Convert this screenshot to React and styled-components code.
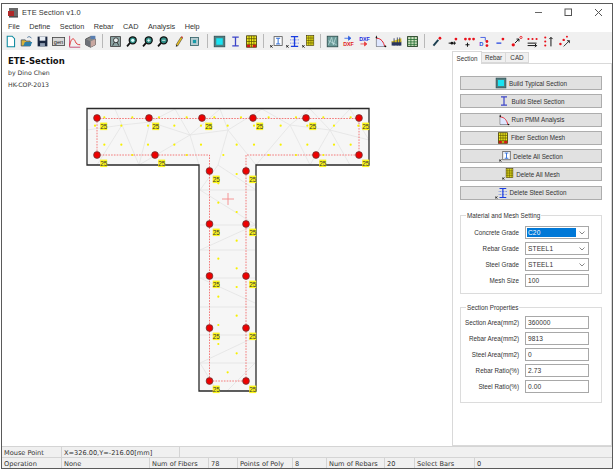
import React from "react";
import styled, { createGlobalStyle } from "styled-components";

const Global = createGlobalStyle`
  html, body { margin: 0; padding: 0; background: #fff; }
  body { width: 615px; height: 472px; overflow: hidden; font-family: "Liberation Sans", Arial, sans-serif; }
`;

const Page = styled.div`
  width: 615px; height: 472px; box-sizing: border-box; padding: 3px 2px 3px 1px;
  background: #fff; display: flex;
`;
const Win = styled.div`
  flex: 1; min-width: 0; display: flex; flex-direction: column; box-sizing: border-box;
  border: 1px solid #5a5a5a; background: #fff; color: #222;
`;
const TitleBar = styled.div`
  height: 17px; flex: none; display: flex; align-items: center; padding: 0 0 0 5px; gap: 3px;
  font-size: 7.4px; letter-spacing: 0.1px; color: #333;
`;
const TitleText = styled.span` flex: 1; `;
const WinButton = styled.div`
  width: 27px; height: 16px; display: flex; align-items: center; justify-content: center; color: #555;
`;
const MenuBar = styled.div`
  height: 11px; flex: none; display: flex; align-items: center; padding-left: 6px; gap: 9.5px;
  font-size: 7.3px; color: #333;
`;
const ToolBar = styled.div`
  height: 18px; flex: none; display: flex; align-items: center; background: #f0f0f0; padding-left: 1px;
`;
const ToolIcon = styled.div`
  width: 15.9px; height: 16px; flex: none; display: flex; align-items: center; justify-content: center;
`;
const ToolSep = styled.div`
  width: 1px; height: 14px; background: #b8b8b8; margin: 0 ${p => p.$gap || 4}px;
  flex: none;
`;
const Main = styled.div`
  flex: 1; min-height: 0; display: flex;
`;
const Canvas = styled.div`
  flex: 1; min-width: 0; display: flex; flex-direction: column; background: #fff;
`;
const Caption = styled.div`
  height: 42px; flex: none; box-sizing: border-box; padding: 6px 0 0 6px;
  font-family: "DejaVu Sans", sans-serif; color: #333; font-size: 6.2px; line-height: 12px;
`;
const CaptionTitle = styled.div`
  font-weight: bold; font-size: 8.5px; color: #111; line-height: 11px;
`;
const Drawing = styled.svg` display: block; flex: none; `;
const Side = styled.div`
  width: 160px; flex: none; display: flex; flex-direction: column; margin-right: 0; font-size: 6.3px; color: #333;
`;
const Tabs = styled.div`
  height: 13px; flex: none; display: flex; align-items: flex-end; position: relative; z-index: 1;
`;
const Tab = styled.div`
  box-sizing: border-box; height: ${p => (p.$active ? 13 : 11)}px; width: ${p => p.$w}px;
  background: ${p => (p.$active ? "#fff" : "#f0f0f0")};
  border: 1px solid #d9d9d9; border-bottom: ${p => (p.$active ? "none" : "1px solid #d9d9d9")};
  margin-left: ${p => (p.$active ? 0 : -1)}px; display: flex; align-items: center; justify-content: center;
  ${p => p.$active && "margin-bottom:-1px;"}
`;
const TabPanel = styled.div`
  flex: 1; min-height: 0; box-sizing: border-box; border: 1px solid #d9d9d9; background: #fff;
  padding: 12px 9px 0 7px; display: flex; flex-direction: column;
`;
const ActionButton = styled.div`
  height: 14px; box-sizing: border-box; margin-bottom: 4.3px; background: #e1e1e1; border: 1px solid #adadad;
  display: flex; align-items: center; justify-content: center; gap: 2px; flex: none;
`;
const Group = styled.div`
  position: relative; box-sizing: border-box; border: 1px solid #dcdcdc; height: ${p => p.$h}px;
  margin-top: ${p => p.$mt}px; padding: ${p => p.$pt}px 12px 0 0; display: flex; flex-direction: column;
  gap: ${p => p.$gap}px; flex: none;
`;
const GroupTitle = styled.div`
  position: absolute; left: 5px; top: -5px; background: #fff; padding: 0 1px; line-height: 9px;
`;
const Row = styled.div`
  display: flex; align-items: center; justify-content: flex-end; height: 13px; flex: none; gap: 6px;
`;
const Field = styled.div`
  box-sizing: border-box; width: 64px; height: 13px; border: 1px solid #a8a8a8; background: #fff;
  display: flex; align-items: center; padding-left: 1px; font-size: 6.6px; letter-spacing: .1px; position: relative;
`;
const Value = styled.span`
  flex: 1; align-self: stretch; margin: 1px 12px 1px 0; padding-left: 1px; display: flex; align-items: center;
  background: ${p => (p.$sel ? "#0078d7" : "transparent")}; color: ${p => (p.$sel ? "#fff" : "#333")};
`;
const Chevron = styled.svg`
  position: absolute; right: 3px; top: 4px;
`;
const Status = styled.div`
  flex: none; font-family: "DejaVu Sans", sans-serif; font-size: 6.6px; color: #333; background: #f0f0f0;
`;
const StatusRow = styled.div`
  display: flex; align-items: center; height: ${p => p.$h}px;
  border-top: 1px solid #d4d4d4; box-sizing: border-box;
`;
const Cell = styled.div`
  width: ${p => p.$w}px; flex: none; box-sizing: border-box; padding: 1px 0 0 2px; white-space: nowrap;
  border-right: ${p => (p.$line ? "1px solid #d4d4d4" : "none")}; align-self: stretch; display: flex; align-items: center;
`;

const S = ({ children, size = 13 }) => (
  <svg width={size} height={size} viewBox="0 0 16 16" aria-hidden="true">{children}</svg>
);
const XMark = () => <path d="M0 12.5l3 3M3 12.5l-3 3" stroke="#111" strokeWidth="1.2" fill="none" />;
const Dot = ({ x, y, r = 1.7, c = "#e8101a" }) => <circle cx={x} cy={y} r={r} fill={c} />;
const Arrow = ({ d, c = "#111" }) => <path d={d} stroke={c} strokeWidth="1.2" fill="none" />;
const Grid = () => (
  <>
    <rect x="2" y="1" width="12" height="14" fill="#f2ec1e" stroke="#3a3000" strokeWidth="1" />
    <path d="M5 1v14M8 1v14M11 1v14M2 4.5h12M2 8h12M2 11.5h12" stroke="#5a5200" strokeWidth=".9" />
    <rect x="2.5" y="12" width="4" height="3" fill="#d01818" />
    <rect x="9.5" y="12" width="4" height="3" fill="#d01818" />
  </>
);
const Typical = () => (
  <>
    <rect x="1.5" y="1.5" width="13" height="13" fill="#4f7f80" stroke="#2f4f55" />
    <rect x="4" y="4" width="8" height="8" fill="#19e3f2" />
  </>
);
const IBeam = ({ c = "#3d45c8" }) => <path d="M4 2.5h8M4 13.5h8M8 2.5v11" stroke={c} strokeWidth="1.6" fill="none" />;
const Magnifier = ({ sign }) => (
  <>
    <circle cx="9.5" cy="6.5" r="4.3" fill="#2f8d86" stroke="#111" strokeWidth="1.6" />
    <path d="M6.5 9.5L2.5 14" stroke="#111" strokeWidth="2.2" />
    {sign === "+" && <path d="M7.5 6.5h4M9.5 4.5v4" stroke="#fff" strokeWidth="1" />}
    {sign === "-" && <path d="M7.5 6.5h4" stroke="#fff" strokeWidth="1" />}
    {sign === "o" && <circle cx="9.5" cy="6.5" r="2" fill="#dff" />}
  </>
);
const Pmm = () => (
  <>
    <path d="M3 1v13h12" stroke="#111" strokeWidth="1" fill="none" />
    <path d="M3 4c6 0 9 5 10 10H3z" fill="#dfe7ff" />
    <path d="M3 4c6 0 9 5 10 10" stroke="#e0202a" strokeWidth="1.2" fill="none" />
    <Dot x={3} y={3} r={1} c="#111" />
    <Dot x={14} y={14} r={1} c="#111" />
  </>
);
const DelSection = () => (
  <>
    <rect x="5" y="2" width="10" height="11" fill="#fff" stroke="#555" />
    <path d="M7.5 4h5M7.5 11h5M10 4v7" stroke="#2b6bd8" strokeWidth="1.2" fill="none" />
    <XMark />
  </>
);
const DelMesh = () => (
  <>
    <g transform="translate(4 0) scale(.75)"><rect x="2" y="1" width="12" height="16" fill="#f2ec1e" stroke="#3a3000" /><path d="M5 1v16M8 1v16M11 1v16M2 5h12M2 9h12M2 13h12" stroke="#5a5200" strokeWidth="1" /></g>
    <XMark />
  </>
);
const DelSteel = () => (
  <>
    <path d="M6 2h9M6 14h9M10.5 2v12" stroke="#1a3de0" strokeWidth="1.6" fill="none" />
    <path d="M5 6h11M5 10h11" stroke="#1a3de0" strokeWidth=".8" strokeDasharray="1 1" fill="none" />
    <XMark />
  </>
);

const icons = {
  page: <path d="M4 1.5h6l3 3v10H4z" fill="#fff" stroke="#0e8aa0" strokeWidth="1.3" />,
  open: (<><path d="M1.5 6h5l1 1.5h5v6h-11z" fill="#d9b23a" stroke="#44505c" /><path d="M4 13.5l2-5h9l-2 5z" fill="#2d7fa8" /><path d="M9 3c2-1.5 4-1 5 1" stroke="#2a5a8a" fill="none" /></>),
  save: (<><rect x="2" y="2" width="12" height="12" fill="#1a2740" /><rect x="4.5" y="2" width="7" height="5" fill="#e8edf3" /><rect x="5" y="10" width="6" height="4" fill="#8e9cb0" /></>),
  gen: (<><rect x=".5" y="3" width="15" height="10" fill="#d8d8d8" stroke="#444" /><text x="8" y="11" textAnchor="middle" fontSize="7" fontFamily="Liberation Sans" fill="#222">gen</text></>),
  chart: (<><path d="M2 1v14h13" stroke="#c03060" fill="none" /><path d="M2 13C4 3 7 3 9 8c1 3 3 4 6 4" stroke="#e02020" fill="none" strokeWidth="1.1" /></>),
  cube: (<><path d="M2 5l6-3 6 3v7l-6 3-6-3z" fill="#888" stroke="#444" /><path d="M8 8l6-3v7l-6 3z" fill="#c8a7a0" /><path d="M2 5l6 3v7l-6-3z" fill="#6c7078" /><rect x="8" y="1" width="6" height="4" fill="#5a7fb0" /></>),
  fit: (<><rect x="2" y="2" width="12" height="12" fill="#90a8a8" stroke="#333" /><circle cx="8.5" cy="6.5" r="3" fill="#e8eeee" stroke="#222" /><path d="M6.5 9l-2 4M10 9l2 4" stroke="#222" /></>),
  zoom: <Magnifier sign="o" />,
  zoomin: <Magnifier sign="+" />,
  zoomout: <Magnifier sign="-" />,
  pencil: (<><path d="M5 12L11 2.5l2 1.2L7 13.5z" fill="#e8c020" stroke="#222" strokeWidth=".6" /><path d="M11 2.5l2 1.2 .6-1.1-2-1.2z" fill="#d02020" /><path d="M5 12l2 1.5-2.3 1z" fill="#111" /></>),
  check: (<><rect x="3" y="3" width="10" height="10" fill="#b8ccd0" stroke="#2f5f66" /><rect x="6" y="6" width="4" height="4" fill="#169aa8" /></>),
  typical: <Typical />,
  ibeam: <IBeam />,
  grid: <Grid />,
  delsec: <DelSection />,
  delmesh: <DelMesh />,
  delsteel: <DelSteel />,
  fibers: (<><rect x="1.5" y="1.5" width="13" height="13" fill="#6a9a98" stroke="#2c4a4a" /><path d="M3 12L7 3l2 9 3-9M3 7l10 5" stroke="#d8f0f0" strokeWidth=".7" fill="none" /></>),
  dxfout: (<><path d="M3 4h7M8 1.5L11 4 8 6.5z" stroke="#2f5fe0" fill="#2f5fe0" /><text x="8" y="14" textAnchor="middle" fontSize="6.6" fontWeight="bold" fontFamily="Liberation Sans" fill="#e01818">DXF</text></>),
  dxfin: (<><text x="8" y="7" textAnchor="middle" fontSize="6.6" fontWeight="bold" fontFamily="Liberation Sans" fill="#1a2be0">DXF</text><path d="M3 11h7M8 8.5l3 2.5-3 2.5z" stroke="#e84040" fill="#e84040" /></>),
  pmm: <Pmm />,
  bars: (<><rect x="2" y="8" width="12" height="5" fill="#2a3560" /><path d="M2 8l12-4v5H2z" fill="#d8c020" /><path d="M5 4v9M9 3v10M12 3v10" stroke="#2a3560" /></>),
  table: (<><rect x="2" y="2" width="12" height="12" fill="#d8e8c8" stroke="#1f3b1f" strokeWidth="1.2" /><path d="M2 5.5h12M2 8.5h12M2 11.5h12M6 2v12M10 2v12" stroke="#1f6b2f" /></>),
  r1: (<><Dot x={11} y={4} /><path d="M3 13L9 6" stroke="#1d3f50" strokeWidth="2.4" /></>),
  r2: (<><Dot x={11} y={5} /><Arrow d="M2 10h9M9 8v4" /><Dot x={6} y={10} r={1.6} c="#111" /></>),
  r3: (<><Dot x={3} y={5} /><Dot x={8} y={5} /><Dot x={13} y={5} /><Arrow d="M3 12h5M5.5 9.5v5" /></>),
  r4: (<><path d="M3 3h6v4" stroke="#2848e0" fill="none" /><text x="4" y="14" textAnchor="middle" fontSize="7" fontWeight="bold" fontFamily="Liberation Sans" fill="#2848e0">D</text><Dot x={11} y={8} /><Dot x={11} y={13} /></>),
  r5: (<><Dot x={11} y={5} /><path d="M3 10h6" stroke="#2848e0" strokeWidth="1.6" /></>),
  r6: (<><Dot x={4} y={12} r={2} /><path d="M6 10l5-5M8 5h3v3" stroke="#111" fill="none" strokeWidth="1.2" /><circle cx="13.5" cy="3" r="1.4" fill="none" stroke="#e8101a" /></>),
  r7: (<><Dot x={3} y={5} r={1.3} /><Dot x={8} y={5} r={1.3} /><Dot x={13} y={5} r={1.3} /><Arrow d="M2 10h11M2 13h11M11 11l2 2-2 2" /></>),
  r8: (<><Dot x={4} y={3} r={1.3} /><Dot x={4} y={8} r={1.3} /><Dot x={4} y={13} r={1.3} /><Arrow d="M11 14V3M9 5l2-2 2 2" /></>),
  r9: (<><Dot x={3} y={11} r={1.5} /><Dot x={7} y={6} r={1.5} /><Dot x={11} y={2} r={1.2} /><path d="M7 14l7-7M11 7h3v3" stroke="#111" fill="none" /></>),
};

const toolbar = [
  ["page", "open", "save", "gen", "chart", "cube"],
  ["fit", "zoom", "zoomin", "zoomout", "pencil", "check"],
  ["typical", "ibeam", "grid"],
  ["delsec", "delsteel", "delmesh"],
  ["fibers", "dxfout", "dxfin", "pmm", "bars", "table"],
  ["r1", "r2", "r3", "r4", "r5", "r6", "r7", "r8", "r9"],
];

const buttons = [
  ["typical", "Build Typical Section"],
  ["ibeam", "Build Steel Section"],
  ["pmm", "Run PMM Analysis"],
  ["grid", "Fiber Section Mesh"],
  ["delsec", "Delete All Section"],
  ["delmesh", "Delete All Mesh"],
  ["delsteel", "Delete Steel Section"],
];

const rebars = [
  [97,118],[149,118],[202,118],[253,118],[306,118],[359,118],
  [97,155],[155,155],[316,155],[359,155],
  [209.5,171],[246,171],[209.5,224],[246,224],[209.5,276],[246,276],[209.5,328],[246,328],[209.5,381],[246,381],
];
const z3 = (x, y) => [80 + x / 3, 100 + y / 3];
const z4 = (x, y) => [190 + x / 3, 220 + y / 3];
const fibers = [
  ...[73,157,237,320,403,483,566,648,730,812].map(x => z3(x, 52)),
  ...[45,124,204,283,363,443,522,602,682,762,835].map(x => z3(x, 77)),
  ...[73,124,204,283,363,470,522,602,682,762,812].map(x => z3(x, 134)),
  ...[157,320,430,566,648,730].map(x => z3(x, 165)),
  z3(470,222), z3(415,250), z3(415,308), z3(470,336),
  ...[[140,62],[85,116],[140,145],[140,201],[85,230],[140,287],[85,315],[85,372],[140,400],[113,457]].map(([x,y]) => z4(x,y)),
];
const mesh = [
  [115,109,122,125],[122,125,97,165],[87,130,122,125],[122,125,150,122],[150,122,139,165],[122,125,139,165],
  [150,122,175,109],[175,109,190,135],[150,122,190,135],[139,165,190,135],[190,135,199,165],[190,135,220,109],
  [190,135,228,130],[220,109,228,130],[228,130,262,109],[228,130,256,165],[228,130,218,165],[256,165,290,125],
  [262,109,290,125],[290,125,310,109],[290,125,330,130],[310,109,330,130],[330,130,350,109],[330,130,310,165],
  [290,125,310,165],[330,130,369,140],[330,130,350,165],[350,109,369,140],[218,165,200,190],[218,165,256,190],
  [200,190,256,190],[200,190,256,225],[200,225,256,225],[200,250,255,250],[200,250,255,225],[200,278,255,303],
  [200,278,255,278],[200,307,255,307],[200,335,255,335],[200,363,255,337],[200,363,217,391],[255,363,227,391],[200,363,255,363],
];
const tShape = "M87 108.5H369V165H256V391H199V165H87Z";
const bars = "M97 118.5H359V155H246V381H209.5V155H97Z";

const Section = () => (
  <Drawing width="450" height="354" viewBox="2 92 450 354">
    <path d={tShape} fill="#f6f6f6" />
    {mesh.map(([a, b, c, d], i) => (
      <line key={i} x1={a} y1={b} x2={c} y2={d} stroke="#e3e3e3" strokeWidth=".8" />
    ))}
    <path d={tShape} fill="none" stroke="#2a2a2a" strokeWidth="1.3" />
    <path d={bars} fill="none" stroke="#f25a5a" strokeWidth=".8" strokeDasharray="1.6 1.2" />
    {fibers.map(([x, y], i) => <circle key={i} cx={x} cy={y} r="1.1" fill="#f6f000" />)}
    {rebars.map(([x, y], i) => (
      <g key={i}>
        <rect x={x + 3.2} y={y + 4.6} width="7" height="7.5" fill="#fbf61c" />
        <text x={x + 6.7} y={y + 10.8} textAnchor="middle" fontSize="6.4" fontFamily="Liberation Sans" fill="#333">25</text>
        <circle cx={x} cy={y} r="3.4" fill="#ee0000" stroke="#5c3a3a" strokeWidth=".7" />
      </g>
    ))}
    <path d="M222 199h12M228 193v12" stroke="#f58a8a" strokeWidth=".9" />
  </Drawing>
);

export default function App() {
  return (
    <>
      <Global />
      <Page>
        <Win>
          <TitleBar>
            <svg width="12" height="12" viewBox="0 0 12 12" aria-hidden="true">
              <rect x="2" y="1" width="9" height="9" fill="#6a6a6a" />
              <rect x="1" y="4" width="6" height="5" fill="#b02828" />
              <path d="M2 10h9" stroke="#333" />
            </svg>
            <TitleText>ETE Section v1.0</TitleText>
            <WinButton><svg width="9" height="9"><path d="M1 4.5h7" stroke="#666" /></svg></WinButton>
            <WinButton><svg width="9" height="9"><rect x="1" y="1" width="6.5" height="6.5" fill="none" stroke="#555" /></svg></WinButton>
            <WinButton><svg width="9" height="9"><path d="M1 1l7 7M8 1l-7 7" stroke="#555" /></svg></WinButton>
          </TitleBar>
          <MenuBar>
            {["File", "Define", "Section", "Rebar", "CAD", "Analysis", "Help"].map(m => <span key={m}>{m}</span>)}
          </MenuBar>
          <ToolBar>
            {toolbar.map((grp, i) => (
              <React.Fragment key={i}>
                {grp.map(n => <ToolIcon key={n}><S>{icons[n]}</S></ToolIcon>)}
                {i < toolbar.length - 1 && <ToolSep />}
              </React.Fragment>
            ))}
          </ToolBar>
          <Main>
            <Canvas>
              <Caption>
                <CaptionTitle>ETE-Section</CaptionTitle>
                <div>by Dino Chen</div>
                <div>HK-COP-2013</div>
              </Caption>
              <Section />
            </Canvas>
            <Side>
              <Tabs>
                <Tab $active $w={30}>Section</Tab>
                <Tab $w={25}>Rebar</Tab>
                <Tab $w={24}>CAD</Tab>
              </Tabs>
              <TabPanel>
                {buttons.map(([ic, label]) => (
                  <ActionButton key={label}><S size={12}>{icons[ic]}</S><span>{label}</span></ActionButton>
                ))}
                <Group $h={79} $mt={10.5} $pt={10} $gap={3.3}>
                  <GroupTitle>Material and Mesh Setting</GroupTitle>
                  {[["Concrete Grade", "C20", true], ["Rebar Grade", "STEEL1"], ["Steel Grade", "STEEL1"]].map(([l, v, s]) => (
                    <Row key={l}>
                      <span>{l}</span>
                      <Field>
                        <Value $sel={s}>{v}</Value>
                        <Chevron width="6" height="4" viewBox="0 0 6 4"><path d="M.5 .5L3 3 5.5 .5" stroke="#555" fill="none" strokeWidth=".7" /></Chevron>
                      </Field>
                    </Row>
                  ))}
                  <Row><span>Mesh Size</span><Field><Value>100</Value></Field></Row>
                </Group>
                <Group $h={96} $mt={13} $pt={8} $gap={3.1}>
                  <GroupTitle>Section Properties</GroupTitle>
                  {[["Section Area(mm2)", "360000"], ["Rebar Area(mm2)", "9813"], ["Steel Area(mm2)", "0"], ["Rebar Ratio(%)", "2.73"], ["Steel Ratio(%)", "0.00"]].map(([l, v]) => (
                    <Row key={l}><span>{l}</span><Field><Value>{v}</Value></Field></Row>
                  ))}
                </Group>
              </TabPanel>
            </Side>
          </Main>
          <Status>
            <StatusRow $h={11}>
              <Cell $w={60} $line>Mouse Point</Cell>
              <Cell $w={118} $line>X=326.00,Y=-216.00[mm]</Cell>
            </StatusRow>
            <StatusRow $h={11}>
              <Cell $w={60} $line>Operation</Cell>
              <Cell $w={88} $line>None</Cell>
              <Cell $w={59} $line>Num of Fibers</Cell>
              <Cell $w={29} $line>78</Cell>
              <Cell $w={55} $line>Points of Poly</Cell>
              <Cell $w={34} $line>8</Cell>
              <Cell $w={58} $line>Num of Rebars</Cell>
              <Cell $w={30} $line>20</Cell>
              <Cell $w={60} $line>Select Bars</Cell>
              <Cell $w={60}>0</Cell>
            </StatusRow>
          </Status>
        </Win>
      </Page>
    </>
  );
}
